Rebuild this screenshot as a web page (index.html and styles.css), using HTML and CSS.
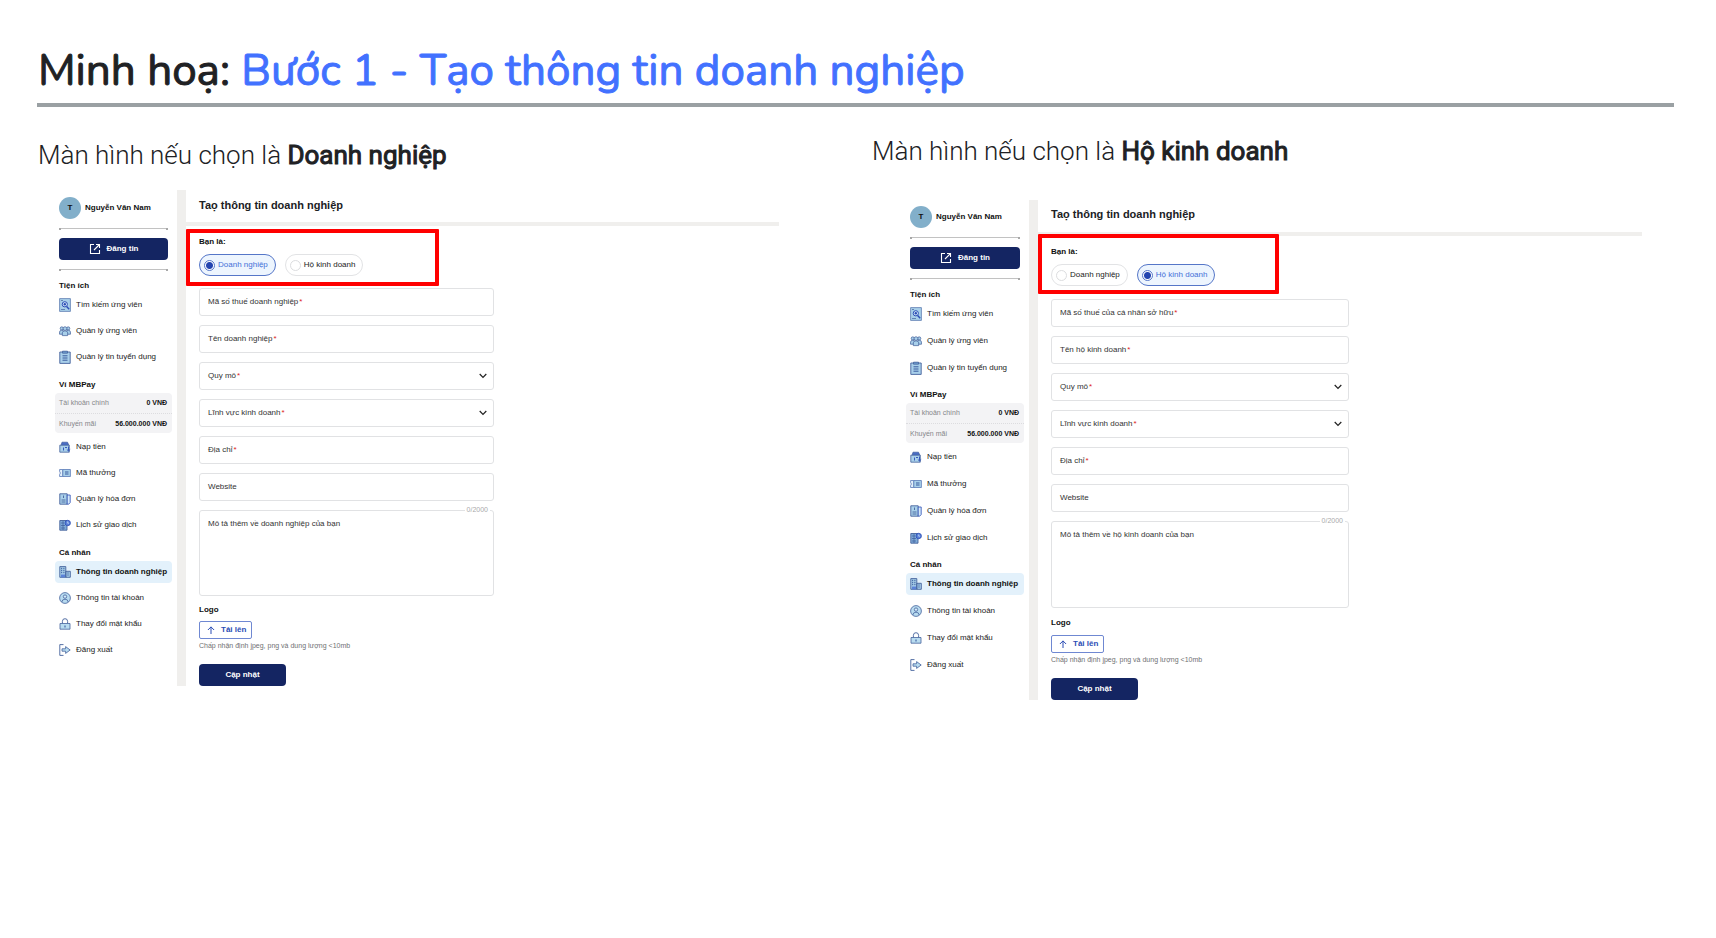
FILE: index.html
```html
<!DOCTYPE html>
<html lang="vi">
<head>
<meta charset="utf-8">
<title>Minh hoạ: Bước 1 - Tạo thông tin doanh nghiệp</title>
<link rel="stylesheet" href="styles.css">
</head>
<body>
<svg class="sprite" aria-hidden="true">
  <symbol id="i-post" viewBox="0 0 12 12"><path d="M5 1.500H1.500v9h9V7M7 1.500h3.500V5M10.500 1.500 5 7" fill="none" stroke="#fff" stroke-width="1.100"/></symbol>
  <symbol id="i-search" viewBox="0 0 12 14"><path d="M.6.6h10.800v12.800H.6z" fill="#a9d0ea" stroke="#5c7bb0" stroke-width=".8"/><circle cx="5.800" cy="6.300" r="2.600" fill="#d5eafa" stroke="#2b4db5"/><circle cx="5.800" cy="6.300" r="1.200" fill="#2b4db5"/><path d="m7.600 8.400 2.600 2.800" stroke="#2b4db5" stroke-width="1.400"/><path d="M2 2.500h2M2 11.500h4" stroke="#44629c" stroke-width=".7"/></symbol>
  <symbol id="i-people" viewBox="0 0 13 12"><g fill="#a9d0ea" stroke="#44629c" stroke-width=".8"><circle cx="3" cy="3.200" r="1.700"/><circle cx="10" cy="3.200" r="1.700"/><path d="M.6 9.500V7.200q0-2 2.400-2t2.400 2v2.300zM7.600 9.500V7.200q0-2 2.400-2t2.400 2v2.300z"/><circle cx="6.500" cy="3.400" r="2"/><path d="M3.600 11V8q0-2.200 2.900-2.200T9.400 8v3z"/></g></symbol>
  <symbol id="i-clip" viewBox="0 0 12 14"><path d="M.8 2h10.400v11.400H.8z" fill="#a9d0ea" stroke="#44629c" stroke-width=".9"/><path d="M3.500 1.200h5v2h-5z" fill="#6f9fd0" stroke="#44629c" stroke-width=".8"/><path d="M3.500 5.800h5M3.500 8h5M3.500 10.200h5" stroke="#2b4d95" stroke-width=".9"/></symbol>
  <symbol id="i-wallet" viewBox="0 0 12 12"><path d="M2 4.500 3 1.200h5.500L10 4.500z" fill="#4a6cc4" stroke="#3d5c9c" stroke-width=".7"/><path d="M.8 4.200h9.500v7H.8z" fill="#a9d0ea" stroke="#44629c" stroke-width=".8"/><path d="M4.500 6.500v3M6 6.500h2M9.500 5.500v4.300M7.800 8.400l1.700 1.600 1.700-1.600" fill="none" stroke="#2b4db5" stroke-width=".9"/></symbol>
  <symbol id="i-ticket" viewBox="0 0 12 12"><path d="M.6 2.500h3.200v7H.6v-2L1.400 6 .6 4.500z" fill="#e4f1fb" stroke="#5b7ab8" stroke-width=".8"/><path d="M3.800 2.500h7.600v7H3.800z" fill="#a9d0ea" stroke="#5b7ab8" stroke-width=".8"/><path d="M6 5h3.500M6 7h3.500" stroke="#2b4d95" stroke-width=".9"/></symbol>
  <symbol id="i-bill" viewBox="0 0 12 12"><path d="M.8.8h7.400v10.400H.8z" fill="#a9d0ea" stroke="#44629c" stroke-width=".9"/><path d="M8.200 2h3v7.500l-1.500 1.700H8.200z" fill="#d5eafa" stroke="#2b4db5" stroke-width=".8"/><path d="M4.500 2.500V5M2.500 7h4M2.500 9h4" stroke="#44629c" stroke-width=".9"/></symbol>
  <symbol id="i-history" viewBox="0 0 12 12"><path d="M.8 1.500H8v9.700H.8z" fill="#7fabd8" stroke="#44629c" stroke-width=".9"/><path d="M2 4h3M2 6.500h4M2 9h4M4 2v9" stroke="#3d5c9c" stroke-width=".7"/><circle cx="8.700" cy="4" r="2.700" fill="#5b82d8" stroke="#2b4db5" stroke-width=".8"/><path d="M8.700 2.500V4.200h1.400" fill="none" stroke="#d5eafa" stroke-width=".7"/></symbol>
  <symbol id="i-company" viewBox="0 0 12 12"><path d="M.8.6h6v10.700h-6zM6.800 5.300h4.500v6H6.800z" fill="#a9d0ea" stroke="#44629c" stroke-width=".9"/><path d="M2.700 1.800v5.400M4.900 1.800v5.400M8.300 7h1.800M8.300 9h1.800" stroke="#2b4d95" stroke-width=".9" stroke-dasharray="1.400 .7"/><path d="M2 8.500h4v2.800H2z" fill="#5b82d8"/></symbol>
  <symbol id="i-user" viewBox="0 0 12 12"><circle cx="6" cy="6" r="5.400" fill="#b9dcf0" stroke="#44629c" stroke-width=".8"/><circle cx="6" cy="4.600" r="1.700" fill="#d5eafa" stroke="#44629c" stroke-width=".8"/><path d="M2.800 10q.3-2.800 3.200-2.800T9.200 10" fill="none" stroke="#44629c" stroke-width=".8"/></symbol>
  <symbol id="i-lock" viewBox="0 0 12 12"><path d="M3.400 5.500V3.300a2.600 2.600 0 0 1 5.200 0v2.200" fill="none" stroke="#44629c" stroke-width=".9"/><path d="M1 5.500h10v5.700H1z" fill="#b9dcf0" stroke="#44629c" stroke-width=".8"/><path d="M6 7.500v2" stroke="#2b4d95"/></symbol>
  <symbol id="i-exit" viewBox="0 0 12 12"><path d="M4.500.6H.8v10.800h3.700" fill="none" stroke="#44629c" stroke-width=".9"/><path d="M3 4.800h3.600V2.600L11.200 6 6.600 9.400V7.200H3z" fill="#b9dcf0" stroke="#44629c" stroke-width=".8"/></symbol>
  <symbol id="i-down" viewBox="0 0 8 6"><path d="m.7 1 3.300 3.500L7.300 1" fill="none" stroke="#222" stroke-width="1.200"/></symbol>
  <symbol id="i-up" viewBox="0 0 8 8"><path d="M4 8V.9M.9 4 4 .9 7.100 4" fill="none" stroke="#2b4db5"/></symbol>
</svg>

<main class="slide">
  <h1 class="title">Minh hoạ: <span class="title-step">Bước 1 - Tạo thông tin doanh nghiệp</span></h1>

  <div class="columns">
    <section class="case case-a">
      <h2 class="caption">Màn hình nếu chọn là <b>Doanh nghiệp</b></h2>
      <div class="app">
        <aside class="sidebar">
          <div class="user"><span class="avatar">T</span><b>Nguyễn Văn Nam</b></div>
          <hr class="divider">
          <button class="btn post" type="button"><svg><use href="#i-post"/></svg>Đăng tin</button>
          <hr class="divider">
          <h3>Tiện ích</h3>
          <nav class="menu">
            <a href="#"><svg class="tall"><use href="#i-search"/></svg>Tìm kiếm ứng viên</a>
            <a href="#"><svg><use href="#i-people"/></svg>Quản lý ứng viên</a>
            <a href="#"><svg class="tall"><use href="#i-clip"/></svg>Quản lý tin tuyển dụng</a>
          </nav>
          <h3>Ví MBPay</h3>
          <dl class="wallet">
            <div><dt>Tài khoản chính</dt><dd>0 VNĐ</dd></div>
            <div><dt>Khuyến mãi</dt><dd>56.000.000 VNĐ</dd></div>
          </dl>
          <nav class="menu">
            <a href="#"><svg><use href="#i-wallet"/></svg>Nạp tiền</a>
            <a href="#"><svg><use href="#i-ticket"/></svg>Mã thưởng</a>
            <a href="#"><svg><use href="#i-bill"/></svg>Quản lý hóa đơn</a>
            <a href="#"><svg><use href="#i-history"/></svg>Lịch sử giao dịch</a>
          </nav>
          <h3>Cá nhân</h3>
          <nav class="menu">
            <a class="active" href="#"><svg><use href="#i-company"/></svg>Thông tin doanh nghiệp</a>
            <a href="#"><svg><use href="#i-user"/></svg>Thông tin tài khoản</a>
            <a href="#"><svg><use href="#i-lock"/></svg>Thay đổi mật khẩu</a>
            <a href="#"><svg><use href="#i-exit"/></svg>Đăng xuất</a>
          </nav>
        </aside>
        <div class="content">
          <h3 class="content-title">Taọ thông tin doanh nghiệp</h3>
          <form class="form">
            <fieldset class="kind">
              <legend>Bạn là:</legend>
              <div class="chips">
                <label class="chip"><input type="radio" name="kind-a" checked>Doanh nghiệp</label>
                <label class="chip"><input type="radio" name="kind-a">Hộ kinh doanh</label>
              </div>
            </fieldset>
            <div class="fields">
              <div class="field"><input id="a-tax" type="text"><label for="a-tax">Mã số thuế doanh nghiệp<i>*</i></label></div>
              <div class="field"><input id="a-name" type="text"><label for="a-name">Tên doanh nghiệp<i>*</i></label></div>
              <div class="field"><select id="a-size"><option></option></select><label for="a-size">Quy mô<i>*</i></label><svg><use href="#i-down"/></svg></div>
              <div class="field"><select id="a-area"><option></option></select><label for="a-area">Lĩnh vực kinh doanh<i>*</i></label><svg><use href="#i-down"/></svg></div>
              <div class="field"><input id="a-addr" type="text"><label for="a-addr">Địa chỉ<i>*</i></label></div>
              <div class="field"><input id="a-web" type="text"><label for="a-web">Website</label></div>
              <div class="field"><textarea id="a-desc"></textarea><label for="a-desc">Mô tả thêm về doanh nghiệp của bạn</label><span class="count">0/2000</span></div>
            </div>
            <h4>Logo</h4>
            <button class="upload" type="button"><svg><use href="#i-up"/></svg>Tải lên</button>
            <p class="hint">Chấp nhận định jpeg, png và dung lượng &lt;10mb</p>
            <button class="btn save" type="button">Cập nhật</button>
          </form>
          <div class="highlight"></div>
        </div>
      </div>
    </section>

    <section class="case case-b">
      <h2 class="caption">Màn hình nếu chọn là <b>Hộ kinh doanh</b></h2>
      <div class="app">
        <aside class="sidebar">
          <div class="user"><span class="avatar">T</span><b>Nguyễn Văn Nam</b></div>
          <hr class="divider">
          <button class="btn post" type="button"><svg><use href="#i-post"/></svg>Đăng tin</button>
          <hr class="divider">
          <h3>Tiện ích</h3>
          <nav class="menu">
            <a href="#"><svg class="tall"><use href="#i-search"/></svg>Tìm kiếm ứng viên</a>
            <a href="#"><svg><use href="#i-people"/></svg>Quản lý ứng viên</a>
            <a href="#"><svg class="tall"><use href="#i-clip"/></svg>Quản lý tin tuyển dụng</a>
          </nav>
          <h3>Ví MBPay</h3>
          <dl class="wallet">
            <div><dt>Tài khoản chính</dt><dd>0 VNĐ</dd></div>
            <div><dt>Khuyến mãi</dt><dd>56.000.000 VNĐ</dd></div>
          </dl>
          <nav class="menu">
            <a href="#"><svg><use href="#i-wallet"/></svg>Nạp tiền</a>
            <a href="#"><svg><use href="#i-ticket"/></svg>Mã thưởng</a>
            <a href="#"><svg><use href="#i-bill"/></svg>Quản lý hóa đơn</a>
            <a href="#"><svg><use href="#i-history"/></svg>Lịch sử giao dịch</a>
          </nav>
          <h3>Cá nhân</h3>
          <nav class="menu">
            <a class="active" href="#"><svg><use href="#i-company"/></svg>Thông tin doanh nghiệp</a>
            <a href="#"><svg><use href="#i-user"/></svg>Thông tin tài khoản</a>
            <a href="#"><svg><use href="#i-lock"/></svg>Thay đổi mật khẩu</a>
            <a href="#"><svg><use href="#i-exit"/></svg>Đăng xuất</a>
          </nav>
        </aside>
        <div class="content">
          <h3 class="content-title">Taọ thông tin doanh nghiệp</h3>
          <form class="form">
            <fieldset class="kind">
              <legend>Bạn là:</legend>
              <div class="chips">
                <label class="chip"><input type="radio" name="kind-b">Doanh nghiệp</label>
                <label class="chip"><input type="radio" name="kind-b" checked>Hộ kinh doanh</label>
              </div>
            </fieldset>
            <div class="fields">
              <div class="field"><input id="b-tax" type="text"><label for="b-tax">Mã số thuế của cá nhân sở hữu<i>*</i></label></div>
              <div class="field"><input id="b-name" type="text"><label for="b-name">Tên hộ kinh doanh<i>*</i></label></div>
              <div class="field"><select id="b-size"><option></option></select><label for="b-size">Quy mô<i>*</i></label><svg><use href="#i-down"/></svg></div>
              <div class="field"><select id="b-area"><option></option></select><label for="b-area">Lĩnh vực kinh doanh<i>*</i></label><svg><use href="#i-down"/></svg></div>
              <div class="field"><input id="b-addr" type="text"><label for="b-addr">Địa chỉ<i>*</i></label></div>
              <div class="field"><input id="b-web" type="text"><label for="b-web">Website</label></div>
              <div class="field"><textarea id="b-desc"></textarea><label for="b-desc">Mô tả thêm về hộ kinh doanh của bạn</label><span class="count">0/2000</span></div>
            </div>
            <h4>Logo</h4>
            <button class="upload" type="button"><svg><use href="#i-up"/></svg>Tải lên</button>
            <p class="hint">Chấp nhận định jpeg, png và dung lượng &lt;10mb</p>
            <button class="btn save" type="button">Cập nhật</button>
          </form>
          <div class="highlight"></div>
        </div>
      </div>
    </section>
  </div>
</main>
</body>
</html>
```

FILE: styles.css
```css
*, *::before, *::after { box-sizing: border-box; }

body { margin: 0; background: #fff; color: #202124; }
h1, h2, h3, h4, p, dl, dd, fieldset, legend { margin: 0; padding: 0; border: 0; }
button, input, select, textarea { font: inherit; margin: 0; }

.sprite { display: none; }

.slide { padding: 36px 42px 0 37px; }

.title {
  height: 71px;
  padding-left: 1px;
  border-bottom: 4px solid #9aa0a3;
  font: 400 44px/70px "Nunito", "Open Sans", sans-serif;
  -webkit-text-stroke: 1px currentColor;
}
.title-step { color: #4271ff; }

.columns {
  display: grid;
  grid-template-columns: 835fr 802fr;
  align-items: start;
}

.caption {
  font: 300 26px/32px Roboto, sans-serif;
  white-space: nowrap;
}
.caption b { font-weight: 400; -webkit-text-stroke: 1px currentColor; }

.case-a { --row: 26px; --head: 12px; padding: 32px 93px 0 18px; }
.case-b { --row: 27px; --head: 11px; padding: 28px 32px 0 34px; }
.case-a .caption { margin: 0 0 19px -17px; }
.case-b .caption { margin: 0 0 33px -34px; }

.app {
  display: flex;
  font: 400 8px/10px "Liberation Sans", Arial, sans-serif;
}

/* Sidebar */
.sidebar { flex: none; width: 122px; padding: 7px 5px 0 0; }
.case-b .sidebar { width: 123px; padding-top: 6px; }

.user { display: flex; align-items: center; gap: 4px; padding-left: 4px; color: #111; }
.avatar {
  display: grid;
  place-items: center;
  width: 22px;
  height: 22px;
  border-radius: 50%;
  background: #82afca;
  font-weight: 700;
}
.divider {
  height: 2px;
  margin: 9px 4px 8px;
  border: 0;
  background:
    linear-gradient(#a8a8a8, #a8a8a8) left / 2px 2px no-repeat,
    linear-gradient(#a8a8a8, #a8a8a8) right / 2px 2px no-repeat,
    linear-gradient(#c2c2c2, #c2c2c2) top / 100% 1px no-repeat;
}
.btn {
  display: flex;
  align-items: center;
  justify-content: center;
  height: 22px;
  border: 0;
  border-radius: 4px;
  background: #142562;
  color: #fff;
  font-size: 8px;
  font-weight: 700;
}
.post { gap: 6px; width: 109px; margin: 0 4px; }
.case-b .post { width: 110px; }
.post svg { width: 12px; height: 12px; }

.sidebar h3 { padding-left: 4px; font-size: 8px; line-height: 10px; font-weight: 700; color: #111; }
.divider + h3 { margin-top: 10px; }
.menu a {
  display: flex;
  align-items: center;
  gap: 5px;
  height: 22px;
  margin-bottom: calc(var(--row) - 22px);
  padding-left: 4px;
  border-radius: 4px;
  color: #222;
  text-decoration: none;
  white-space: nowrap;
}
.menu a.active { background: #e3f1fb; color: #111; font-weight: 700; }
.menu svg { width: 12px; height: 12px; }
.menu svg.tall { height: 14px; }
.menu + h3 { margin-top: var(--head); }
.sidebar h3 + .menu { margin-top: 3px; }

.wallet { margin: 3px 0; border-radius: 4px; background: #f3f3f5; font-size: 7px; }
.wallet div {
  display: flex;
  align-items: center;
  justify-content: space-between;
  height: 20px;
  padding: 0 5px 0 4px;
}
.wallet div + div { border-top: 1px dotted #dcdcdf; }
.wallet dt { color: #85868a; }
.wallet dd { color: #111; font-weight: 700; }

/* Form panel */
.content {
  position: relative;
  flex: 1;
  border-left: 9px solid #f0efed;
}
.content-title {
  height: 36px;
  padding-left: 13px;
  border-bottom: 4px solid #f0efed;
  font-size: 11px;
  line-height: 30px;
  font-weight: 700;
}
.case-b .content-title { line-height: 28px; }
.form { width: 308px; padding: 11px 0 0 13px; }
.case-b .form { width: 311px; }

.form legend, .form h4 { color: #111; font-size: 8px; line-height: 10px; font-weight: 700; }
.chips { display: flex; gap: 9px; margin: 7px 0 12px; }
.case-b .chips { margin-bottom: 13px; }
.chip {
  display: flex;
  align-items: center;
  gap: 3px;
  height: 22px;
  padding: 0 7px 0 4px;
  border: 1px solid #e2e3e5;
  border-radius: 11px;
  color: #222;
  white-space: nowrap;
}
.chip input {
  appearance: none;
  width: 11px;
  height: 11px;
  border: 1px solid #dcdddf;
  border-radius: 50%;
}
.chip:has(:checked) { border-color: #5576c8; background: #edf5fe; color: #4470d8; }
.chip input:checked {
  border-color: #5576c8;
  background: radial-gradient(circle, #2445b0 3px, #fff 4px);
}

.fields { display: grid; gap: 9px; }
.field { position: relative; display: grid; }
.field input, .field select, .field textarea {
  width: 100%;
  height: 28px;
  padding: 0 8px;
  border: 1px solid #e1e2e4;
  border-radius: 3px;
  background: #fff;
  appearance: none;
  resize: none;
}
.field textarea { height: 86px; }
.case-b .field textarea { height: 87px; }
.field label { position: absolute; top: 9px; left: 9px; line-height: 10px; color: #333; }
.field i { margin-left: 1px; color: #d22; font-style: normal; }
.field svg { position: absolute; top: 11px; right: 7px; width: 8px; height: 6px; }
.count {
  position: absolute;
  top: -5px;
  right: 4px;
  padding: 0 2px;
  background: #fff;
  color: #a9aaac;
  font-size: 7px;
}

.form h4 { margin: 9px 0 6px; }
.case-b h4 { margin: 10px 0 7px; }
.upload {
  display: flex;
  align-items: center;
  gap: 6px;
  height: 18px;
  padding: 0 5px 0 7px;
  border: 1px solid #6f88d2;
  border-radius: 2px;
  background: #fff;
  color: #2b4db5;
  font-weight: 700;
}
.upload svg { width: 8px; height: 8px; }
.hint { margin: 2px 0 13px; color: #6f7073; font-size: 7px; white-space: nowrap; }
.save { width: 87px; }

/* Red marker drawn over the choice row */
.highlight {
  position: absolute;
  top: 39px;
  left: 0;
  width: 253px;
  height: 57px;
  border: 4px solid #f00;
  border-radius: 1px;
}
.case-b .highlight { top: 34px; width: 241px; height: 60px; }
```
